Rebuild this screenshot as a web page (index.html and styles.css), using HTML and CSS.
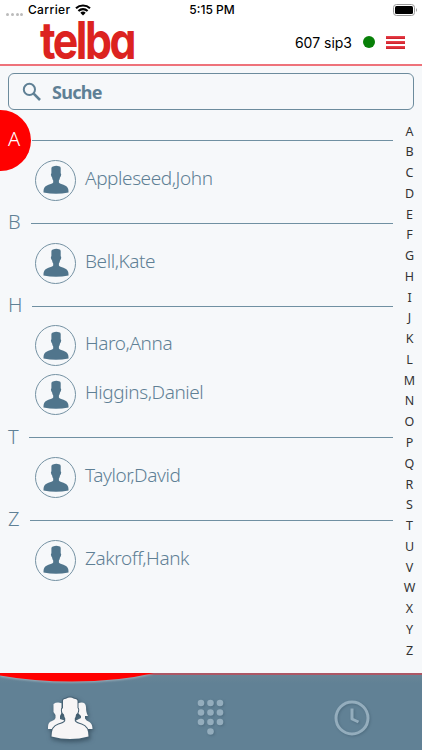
FILE: index.html
```html
<!DOCTYPE html>
<html lang="de">
  <head>
    <meta charset="UTF-8" />
    <meta name="viewport" content="width=device-width, initial-scale=1.0" />
    <title>telba</title>
    <link rel="stylesheet" href="styles.css">
  </head>
  <body>
    <svg class="defs" width="0" height="0">
      <symbol id="person" viewBox="0 0 26 30">
        <path d="M8.4 3.2Q8.5 1.8 10 1.5Q13 .4 16 1.2Q17.7 1.2 17.7 3V8.3Q18.7 9 17.8 11.2L17 12.5Q16.8 14.5 15.9 15.5V17.6C17 20 24 19.3 25.2 24Q25.6 25.6 25.5 27.4Q19 28.8 13 28.8Q7 28.8 .5 27.4Q.4 25.6 .8 24C2 19.3 9 20 10.2 17.6V15.5Q9.3 14.5 9.1 12.5L8.3 11.2Q7.4 9 8.4 8.3Z" />
      </symbol>
    </svg>
    <header class="header">
      <div class="status-bar">
        <div class="carrier">
          <span class="signal"><i></i><i></i><i></i><i></i></span>
          <span>Carrier</span>
          <svg width="16" height="12" viewBox="0 0 16 12">
            <path d="M1 4.3a10.2 10.2 0 0 1 14 0M3.4 6.9a6.8 6.8 0 0 1 9.2 0" fill="none" stroke="#000" stroke-width="2.1" />
            <path d="M5.3 8.8a4 4 0 0 1 5.4 0L8 11.5z" />
          </svg>
        </div>
        <span class="time">5:15 PM</span>
        <svg class="battery" width="25" height="12" viewBox="0 0 25 12">
          <rect x=".5" y=".5" width="21" height="11" rx="3" fill="none" stroke="#999" />
          <rect x="2" y="2" width="18" height="8" rx="1.5" />
          <path d="M23 4q2 2 0 4z" fill="#999" />
        </svg>
      </div>
      <div class="title-bar">
        <svg class="logo" width="96" height="42" viewBox="0 0 96 42">
          <text x="0" y="39" textLength="94" lengthAdjust="spacingAndGlyphs">telba</text>
        </svg>
        <div class="account">
          <span class="account-name">607 sip3</span>
          <span class="online"></span>
          <button class="menu-btn" aria-label="Menu"><i></i><i></i><i></i></button>
        </div>
      </div>
    </header>
    <main class="content">
      <div class="search">
        <svg width="20" height="20" viewBox="0 0 20 20" fill="none" stroke="#5f8095">
          <circle cx="7.4" cy="7.4" r="5.6" stroke-width="2" />
          <path d="M11.7 11.7L18 18" stroke-width="2.6" />
        </svg>
        <span>Suche</span>
      </div>
      <div class="contacts">
        <section class="group">
          <h2 class="active"><span>A</span></h2>
          <div class="contact"><div class="avatar"><svg><use href="#person" /></svg></div><span>Appleseed,John</span></div>
        </section>
        <section class="group">
          <h2><span>B</span></h2>
          <div class="contact"><div class="avatar"><svg><use href="#person" /></svg></div><span>Bell,Kate</span></div>
        </section>
        <section class="group">
          <h2><span>H</span></h2>
          <div class="contact"><div class="avatar"><svg><use href="#person" /></svg></div><span>Haro,Anna</span></div>
          <div class="contact"><div class="avatar"><svg><use href="#person" /></svg></div><span>Higgins,Daniel</span></div>
        </section>
        <section class="group">
          <h2><span>T</span></h2>
          <div class="contact"><div class="avatar"><svg><use href="#person" /></svg></div><span>Taylor,David</span></div>
        </section>
        <section class="group">
          <h2><span>Z</span></h2>
          <div class="contact"><div class="avatar"><svg><use href="#person" /></svg></div><span>Zakroff,Hank</span></div>
        </section>
      </div>
      <nav class="letters">
        <span>A</span><span>B</span><span>C</span><span>D</span><span>E</span><span>F</span><span>G</span><span>H</span><span>I</span><span>J</span><span>K</span><span>L</span><span>M</span><span>N</span><span>O</span><span>P</span><span>Q</span><span>R</span><span>S</span><span>T</span><span>U</span><span>V</span><span>W</span><span>X</span><span>Y</span><span>Z</span>
      </nav>
    </main>
    <footer class="tabs">
      <svg class="tab-marker" width="154" height="12" viewBox="0 0 154 12">
        <path d="M0 0H154Q118 8.6 72 8.6Q34 8.6 0 2.5Z" fill="#f00" />
      </svg>
      <div class="tab">
        <svg class="people" width="46" height="44" viewBox="0 0 46 44">
          <path d="M6.5 8Q10 5.5 14.5 7.2V17L13 20V23L19 25V33H1V31Q1 26 5 25Q8 24 8.5 22V19L6.5 16Z" />
          <path d="M31 7.2Q38.5 5 39 11Q39 17 41 20H38V22.5Q39 24.5 42.5 26Q45.5 28 45.5 33H28V25L34 22V20L31 17Z" />
          <path class="front" d="M16 4.5Q16 3 19 2.7Q23 .2 27 2.7Q30.5 3 30.5 5V12Q32 13 30.5 17L29 18.5Q28.8 21 27.8 22.3V25Q29 27 34.5 28.5Q41.5 30.5 41.5 40.5Q32 43 23 43Q14 43 4.5 40.5Q4.5 30.5 11.5 28.5Q17 27 18.2 25V22.3Q17.2 21 17 18.5L15.5 17Q14 13 16 12Z" />
        </svg>
      </div>
      <div class="tab">
        <svg class="dim" width="28" height="38" viewBox="0 0 28 38">
          <circle cx="4" cy="4" r="3.3" /><circle cx="13.5" cy="4" r="3.3" /><circle cx="23" cy="4" r="3.3" />
          <circle cx="4" cy="13.5" r="3.3" /><circle cx="13.5" cy="13.5" r="3.3" /><circle cx="23" cy="13.5" r="3.3" />
          <circle cx="4" cy="23" r="3.3" /><circle cx="13.5" cy="23" r="3.3" /><circle cx="23" cy="23" r="3.3" />
          <circle cx="13.5" cy="32.5" r="3.3" />
        </svg>
      </div>
      <div class="tab">
        <svg class="dim clock" width="36" height="36" viewBox="0 0 36 36">
          <circle cx="18" cy="18" r="16" />
          <path d="M18 8.5V19L24.5 22" />
        </svg>
      </div>
    </footer>
  </body>
</html>
```
FILE: styles.css
```css
body {
  margin: 0;
  height: 100vh;
  display: flex;
  flex-direction: column;
  overflow: hidden;
  background: #f6f8fa;
  color: #5f8095;
  font-family: "Noto Sans", "Open Sans", sans-serif;
}
.defs {
  position: absolute;
}
.header {
  box-sizing: border-box;
  height: 66px;
  background: #fff;
  border-bottom: 2px solid #ee727a;
  color: #000;
  font-family: Inter, sans-serif;
}
.status-bar {
  height: 20px;
  display: grid;
  grid-template-columns: 1fr auto 1fr;
  align-items: center;
  font-size: 12px;
  font-weight: 500;
  line-height: 12px;
  padding: 0 4px 0 6px;
}
.carrier {
  display: flex;
  align-items: center;
  gap: 4.5px;
  letter-spacing: 0.4px;
}
.signal {
  display: flex;
  gap: 1.8px;
  padding-top: 8px;
}
.signal i {
  width: 3px;
  height: 3px;
  border-radius: 50%;
  background: #bbb;
}
.battery {
  justify-self: end;
}
.title-bar {
  height: 44px;
  display: flex;
  justify-content: space-between;
  padding: 0 17px 0 40px;
}
.logo {
  overflow: visible;
}
.logo text {
  font-family: Inter, sans-serif;
  font-size: 52px;
  font-weight: 700;
  font-feature-settings: "cv11";
  letter-spacing: -3px;
  fill: #dc2320;
}
.account {
  display: flex;
  align-items: center;
  height: 44px;
}
.account-name {
  font-size: 14px;
}
.online {
  width: 12px;
  height: 12px;
  margin: 0 11px;
  border-radius: 50%;
  background: #088008;
}
.menu-btn {
  display: flex;
  flex-direction: column;
  gap: 2px;
  width: 19px;
  padding: 0;
  border: 0;
  background: none;
}
.menu-btn i {
  height: 3px;
  background: linear-gradient(#ee4650, #c91d27);
}
.content {
  flex: 1;
  min-height: 0;
  display: grid;
  grid-template-columns: 1fr 25px;
  grid-template-rows: 44px 1fr;
}
.search {
  grid-column: 1 / 3;
  box-sizing: border-box;
  height: 37px;
  margin: 7px 8px 0;
  padding-left: 13px;
  display: flex;
  align-items: center;
  gap: 10px;
  border: 1px solid #6c8b9d;
  border-radius: 6px;
  font-size: 18px;
  font-weight: 700;
  letter-spacing: -0.7px;
}
.contacts {
  padding-top: 12px;
}
.group h2 {
  margin: 0;
  height: 34px;
  padding: 0 4px 0 8px;
  display: flex;
  align-items: center;
  gap: 10px;
  font-size: 20px;
  font-weight: 300;
}
.group h2::after {
  content: "";
  flex: 1;
  height: 1px;
  margin-top: 3px;
  background: #7090a2;
}
.group h2.active {
  color: #fff;
  gap: 0;
  padding-left: 0;
}
.active span {
  box-sizing: border-box;
  width: 31px;
  height: 61px;
  margin: 2px 1px 0 0;
  padding-left: 8px;
  line-height: 57px;
  border-radius: 0 31px 31px 0;
  background: #f00;
}
.contact {
  height: 48.8px;
  display: flex;
  align-items: center;
  gap: 9px;
  padding-left: 35px;
  font-size: 19px;
  font-weight: 300;
  letter-spacing: -0.42px;
}
.contact span {
  margin-top: -5px;
}
.avatar {
  box-sizing: border-box;
  width: 41px;
  height: 41px;
  display: flex;
  align-items: center;
  justify-content: center;
  border: 1px solid #7592a3;
  border-radius: 50%;
}
.avatar svg {
  width: 26px;
  height: 30px;
  fill: #50758c;
}
.letters {
  padding-top: 11.5px;
  display: flex;
  flex-direction: column;
  color: #333;
  font-size: 12.5px;
  text-align: center;
}
.letters span {
  height: 20.78px;
  line-height: 20.78px;
}
.tabs {
  position: relative;
  box-sizing: border-box;
  height: 77px;
  display: grid;
  grid-template-columns: repeat(3, 1fr);
  border-top: 2px solid #ad5765;
  background: linear-gradient(#688597, #618195 8px);
}
.tab-marker {
  position: absolute;
  left: 0;
  top: -2px;
  filter: drop-shadow(0 1px 1px #ffffff60);
}
.tab {
  display: flex;
  align-items: center;
  justify-content: center;
  padding-top: 10px;
}
.people {
  fill: #f7f5f6;
  filter: drop-shadow(1px 2px 2px #24384899);
}
.people .front {
  stroke: #466174;
  stroke-width: 2;
  paint-order: stroke;
}
.dim {
  fill: #94adbd;
  filter: drop-shadow(1px 1px 1px #3e596b80);
}
.clock {
  fill: none;
  stroke: #94adbd;
  stroke-width: 3;
  stroke-linejoin: round;
}
```
